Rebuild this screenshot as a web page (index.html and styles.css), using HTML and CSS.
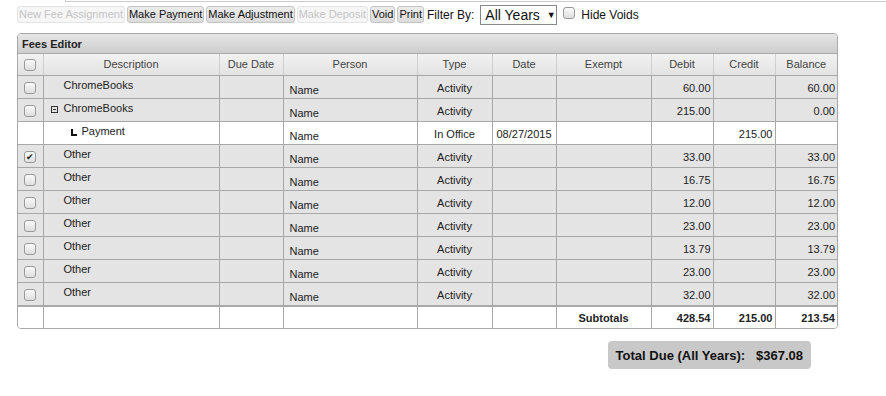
FILE: index.html
```html
<!DOCTYPE html>
<html lang="en">
<head>
    <meta charset="UTF-8">
    <title>Fees Editor</title>
    <link rel="stylesheet" href="styles.css">
</head>
<body>
    <div class="topline"></div>

    <div class="toolbar">
        <button class="btn" disabled>New Fee Assignment</button>
        <button class="btn">Make Payment</button>
        <button class="btn">Make Adjustment</button>
        <button class="btn" disabled>Make Deposit</button>
        <button class="btn">Void</button>
        <button class="btn">Print</button>
        <span class="filter-label">Filter By:</span>
        <span class="select">All Years <span class="arrow">&#9660;</span></span>
        <span class="check"></span>
        <span class="hide-label">Hide Voids</span>
    </div>

    <div class="panel">
        <div class="panel-title">Fees Editor</div>
        <table class="fees">
            <colgroup>
                <col style="width:25px">
                <col style="width:176px">
                <col style="width:64px">
                <col style="width:134px">
                <col style="width:75px">
                <col style="width:64px">
                <col style="width:95px">
                <col style="width:62px">
                <col style="width:62px">
                <col style="width:62px">
            </colgroup>
            <thead>
                <tr>
                    <th><span class="check"></span></th>
                    <th>Description</th>
                    <th>Due Date</th>
                    <th>Person</th>
                    <th>Type</th>
                    <th>Date</th>
                    <th>Exempt</th>
                    <th>Debit</th>
                    <th>Credit</th>
                    <th>Balance</th>
                </tr>
            </thead>
            <tbody>
                <tr class="fee">
                    <td class="cb"><span class="check"></span></td>
                    <td class="desc">ChromeBooks</td>
                    <td></td>
                    <td class="person">Name</td>
                    <td class="mid">Activity</td>
                    <td></td>
                    <td></td>
                    <td class="num">60.00</td>
                    <td class="num"></td>
                    <td class="num">60.00</td>
                </tr>
                <tr class="fee">
                    <td class="cb"><span class="check"></span></td>
                    <td class="desc expanded"><span class="toggle"></span>ChromeBooks</td>
                    <td></td>
                    <td class="person">Name</td>
                    <td class="mid">Activity</td>
                    <td></td>
                    <td></td>
                    <td class="num">215.00</td>
                    <td class="num"></td>
                    <td class="num">0.00</td>
                </tr>
                <tr class="payment">
                    <td class="cb"></td>
                    <td class="desc child"><span class="elbow"></span>Payment</td>
                    <td></td>
                    <td class="person">Name</td>
                    <td class="mid">In Office</td>
                    <td class="mid">08/27/2015</td>
                    <td></td>
                    <td class="num"></td>
                    <td class="num">215.00</td>
                    <td class="num"></td>
                </tr>
                <tr class="fee">
                    <td class="cb"><span class="check checked">&#10004;</span></td>
                    <td class="desc">Other</td>
                    <td></td>
                    <td class="person">Name</td>
                    <td class="mid">Activity</td>
                    <td></td>
                    <td></td>
                    <td class="num">33.00</td>
                    <td class="num"></td>
                    <td class="num">33.00</td>
                </tr>
                <tr class="fee">
                    <td class="cb"><span class="check"></span></td>
                    <td class="desc">Other</td>
                    <td></td>
                    <td class="person">Name</td>
                    <td class="mid">Activity</td>
                    <td></td>
                    <td></td>
                    <td class="num">16.75</td>
                    <td class="num"></td>
                    <td class="num">16.75</td>
                </tr>
                <tr class="fee">
                    <td class="cb"><span class="check"></span></td>
                    <td class="desc">Other</td>
                    <td></td>
                    <td class="person">Name</td>
                    <td class="mid">Activity</td>
                    <td></td>
                    <td></td>
                    <td class="num">12.00</td>
                    <td class="num"></td>
                    <td class="num">12.00</td>
                </tr>
                <tr class="fee">
                    <td class="cb"><span class="check"></span></td>
                    <td class="desc">Other</td>
                    <td></td>
                    <td class="person">Name</td>
                    <td class="mid">Activity</td>
                    <td></td>
                    <td></td>
                    <td class="num">23.00</td>
                    <td class="num"></td>
                    <td class="num">23.00</td>
                </tr>
                <tr class="fee">
                    <td class="cb"><span class="check"></span></td>
                    <td class="desc">Other</td>
                    <td></td>
                    <td class="person">Name</td>
                    <td class="mid">Activity</td>
                    <td></td>
                    <td></td>
                    <td class="num">13.79</td>
                    <td class="num"></td>
                    <td class="num">13.79</td>
                </tr>
                <tr class="fee">
                    <td class="cb"><span class="check"></span></td>
                    <td class="desc">Other</td>
                    <td></td>
                    <td class="person">Name</td>
                    <td class="mid">Activity</td>
                    <td></td>
                    <td></td>
                    <td class="num">23.00</td>
                    <td class="num"></td>
                    <td class="num">23.00</td>
                </tr>
                <tr class="fee">
                    <td class="cb"><span class="check"></span></td>
                    <td class="desc">Other</td>
                    <td></td>
                    <td class="person">Name</td>
                    <td class="mid">Activity</td>
                    <td></td>
                    <td></td>
                    <td class="num">32.00</td>
                    <td class="num"></td>
                    <td class="num">32.00</td>
                </tr>
            </tbody>
            <tfoot>
                <tr>
                    <td></td>
                    <td></td>
                    <td></td>
                    <td></td>
                    <td></td>
                    <td></td>
                    <td class="label">Subtotals</td>
                    <td class="num">428.54</td>
                    <td class="num">215.00</td>
                    <td class="num">213.54</td>
                </tr>
            </tfoot>
        </table>
    </div>

    <div class="total-row">
        <div class="total">Total Due (All Years):&nbsp;&nbsp; $367.08</div>
    </div>
</body>
</html>
```

FILE: styles.css
```css
body {
    margin: 0;
    font-family: "Liberation Sans", Arial, sans-serif;
    background-color: #fff;
    color: #222;
}

.topline {
    margin-left: 65px;
    height: 1px;
    border-left: 1px solid #ccc;
    border-bottom: 1px solid #ccc;
}

.toolbar {
    display: flex;
    align-items: center;
    gap: 2px;
    padding-left: 17px;
    margin-top: 1px;
    height: 23px;
}

.btn {
    flex-shrink: 0;
    font-family: "Liberation Sans", Arial, sans-serif;
    font-size: 11px;
    height: 17px;
    padding: 0 1px;
    color: #111;
    background: linear-gradient(#ececec, #dcdcdc);
    border: 1px solid #c4c4c4;
    border-radius: 3px;
    line-height: 15px;
}

.btn:disabled {
    color: #c4c4c4;
    background: #f6f6f6;
    border-color: #e4e4e4;
}

.filter-label {
    font-size: 12px;
    margin-left: 1px;
    color: #111;
}

.select {
    display: inline-block;
    box-sizing: border-box;
    height: 20px;
    width: 77px;
    margin-left: 4px;
    padding: 1px 0 0 4px;
    border: 1px solid #888;
    font-size: 14px;
    color: #111;
    line-height: 17px;
}

.select .arrow {
    font-size: 9px;
    vertical-align: 2px;
    margin-left: 3px;
}

.check {
    display: inline-block;
    box-sizing: border-box;
    width: 12px;
    height: 12px;
    border: 1px solid #999;
    border-radius: 3px;
    background: linear-gradient(#fafafa, #dedede);
    vertical-align: middle;
    font-size: 9px;
    line-height: 10px;
    text-align: center;
    color: #222;
}

.toolbar .check {
    margin-left: 4px;
    margin-top: -4px;
}

.hide-label {
    font-size: 12px;
    margin-left: 4px;
    color: #111;
}

.panel {
    margin: 7px 0 0 17px;
    width: 821px;
    box-sizing: border-box;
    border: 1px solid #a8a8a8;
    border-radius: 4px;
    overflow: hidden;
}

.panel-title {
    height: 19px;
    padding-left: 4px;
    font-size: 11px;
    font-weight: bold;
    line-height: 20px;
    color: #222;
    background: linear-gradient(#e6e6e6, #cdcdcd);
    border-bottom: 1px solid #a8a8a8;
}

.fees {
    width: 819px;
    border-collapse: collapse;
    table-layout: fixed;
    font-size: 11px;
    color: #222;
}

.fees th {
    height: 20px;
    padding: 0 0 1px;
    font-weight: normal;
    color: #444;
    background: linear-gradient(#f2f2f2, #e2e2e2);
    border: 1px solid #cfcfcf;
    border-top: none;
    border-bottom: 1px solid #a8a8a8;
}

.fees td {
    height: 22px;
    padding: 0 4px;
    border: 1px solid #a8a8a8;
    text-align: center;
    vertical-align: middle;
    white-space: nowrap;
}

.fees th:first-child,
.fees td:first-child {
    border-left: none;
}

.fees th:last-child,
.fees td:last-child {
    border-right: none;
}

.fee td {
    background: #e4e4e4;
}

.payment td {
    background: #fff;
}

.fees td.cb {
    padding: 0;
}

.fees td.desc {
    height: 19px;
    text-align: left;
    vertical-align: top;
    padding: 3px 0 0 20px;
}

.fees td.expanded {
    padding-left: 7px;
}

.fees td.child {
    padding-left: 27px;
}

.fees td.person {
    height: 20px;
    text-align: left;
    vertical-align: bottom;
    padding: 0 0 2px 6px;
}

.fees td.mid {
    height: 20px;
    padding-top: 2px;
}

.fees td.num {
    height: 20px;
    text-align: right;
    padding: 2px 2px 0 0;
}

.toggle {
    display: inline-block;
    box-sizing: border-box;
    position: relative;
    width: 7px;
    height: 7px;
    border: 1px solid #333;
    margin-right: 6px;
    vertical-align: -1px;
}

.toggle::after {
    content: "";
    position: absolute;
    left: 1px;
    top: 2px;
    width: 3px;
    height: 1px;
    background: #333;
}

.elbow {
    display: inline-block;
    width: 4px;
    height: 5px;
    border-left: 2px solid #111;
    border-bottom: 2px solid #111;
    margin-right: 5px;
    vertical-align: -1px;
}

.fees tfoot td {
    height: 21px;
    background: #fff;
    border-top: 2px solid #a8a8a8;
    border-bottom: none;
    font-weight: bold;
}

.fees tfoot td.num {
    height: 21px;
    padding: 0 2px 0 0;
}

.fees td.label {
    text-align: center;
}

.total-row {
    display: flex;
    justify-content: flex-end;
    width: 811px;
    margin-top: 12px;
}

.total {
    height: 28px;
    padding: 0 8px;
    line-height: 29px;
    font-size: 13px;
    font-weight: bold;
    color: #111;
    background: #c8c8c8;
    border-radius: 4px;
}
```
